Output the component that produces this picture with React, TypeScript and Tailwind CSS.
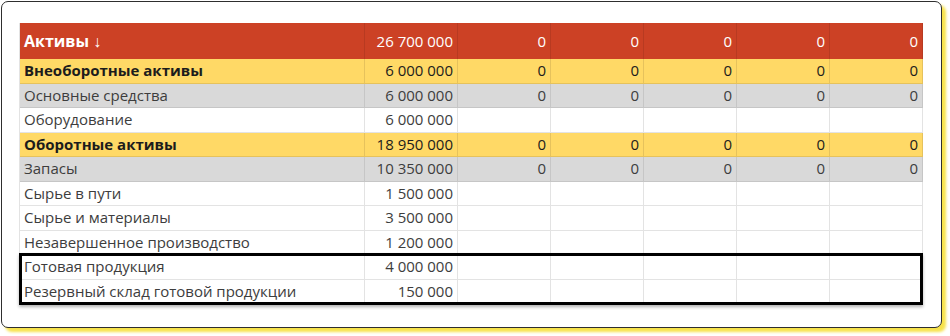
import React from 'react';

type Row = {
  label: string;
  total: string;
  kind: 'group' | 'sub' | 'item';
  zeros?: boolean;
};

const rows: Row[] = [
  { label: 'Внеоборотные активы', total: '6 000 000', kind: 'group', zeros: true },
  { label: 'Основные средства', total: '6 000 000', kind: 'sub', zeros: true },
  { label: 'Оборудование', total: '6 000 000', kind: 'item' },
  { label: 'Оборотные активы', total: '18 950 000', kind: 'group', zeros: true },
  { label: 'Запасы', total: '10 350 000', kind: 'sub', zeros: true },
  { label: 'Сырье в пути', total: '1 500 000', kind: 'item' },
  { label: 'Сырье и материалы', total: '3 500 000', kind: 'item' },
  { label: 'Незавершенное производство', total: '1 200 000', kind: 'item' },
];

const boxed: Row[] = [
  { label: 'Готовая продукция', total: '4 000 000', kind: 'item' },
  { label: 'Резервный склад готовой продукции', total: '150 000', kind: 'item' },
];

const periods = [0, 1, 2, 3, 4];

const rowStyle = {
  group: 'bg-[#ffd966] text-[#1c1c1c]',
  sub: 'bg-[#d9d9d9] text-[#3d3d3d]',
  item: 'bg-white text-[#3d3d3d]',
};

const cellBorder = {
  group: 'border-[#e6c25c]',
  sub: 'border-[#c6c6c6]',
  item: 'border-[#e3e3e3]',
};

const TableRow: React.FC<{ row: Row }> = ({ row }) => {
  const b = cellBorder[row.kind];
  return (
    <div className={`flex h-[24.5px] ${rowStyle[row.kind]}`}>
      <div className={`w-[345px] shrink-0 border-r border-b ${b} pl-[4px] flex items-center ${row.kind === 'group' ? 'font-bold' : ''}`}>
        {row.label}
      </div>
      <div className={`w-[93px] shrink-0 border-r border-b ${b} pr-[4px] flex items-center justify-end`}>
        {row.total}
      </div>
      {periods.map((p) => (
        <div key={p} className={`w-[93px] shrink-0 border-r border-b ${b} pr-[4px] flex items-center justify-end`}>
          {row.zeros ? '0' : ''}
        </div>
      ))}
    </div>
  );
};

export default function App() {
  return (
    <div className="w-[950px] h-[336px] bg-white pt-px pl-px" style={{ fontFamily: '"Open Sans", "Liberation Sans", sans-serif' }}>
      <div className="w-[941px] h-[327px] rounded-[7px] border border-[#2e2e2e] bg-white shadow-[4px_4px_3px_#f7e24a] pl-[17px] pt-[21px]">
        <div className="w-[903px] text-[15px] leading-none border-l border-[#e3e3e3]">
          <div className="flex h-[36px] bg-[#cc4125] text-white">
            <div className="w-[345px] shrink-0 border-r border-[#b83a21] pl-[4px] flex items-center text-[16px] font-bold">
              Активы ↓
            </div>
            <div className="w-[93px] shrink-0 border-r border-[#b83a21] pr-[4px] flex items-center justify-end">
              26 700 000
            </div>
            {periods.map((p) => (
              <div key={p} className="w-[93px] shrink-0 border-r border-[#b83a21] pr-[4px] flex items-center justify-end">
                0
              </div>
            ))}
          </div>
          {rows.map((r) => (
            <TableRow key={r.label} row={r} />
          ))}
          <div className="relative">
            {boxed.map((r) => (
              <TableRow key={r.label} row={r} />
            ))}
            <div className="absolute -top-[2px] -bottom-[1px] -left-[1px] -right-[1px] border-[3px] border-black shadow-[0_2px_3px_rgba(0,0,0,0.3)] pointer-events-none" />
          </div>
        </div>
      </div>
    </div>
  );
}
